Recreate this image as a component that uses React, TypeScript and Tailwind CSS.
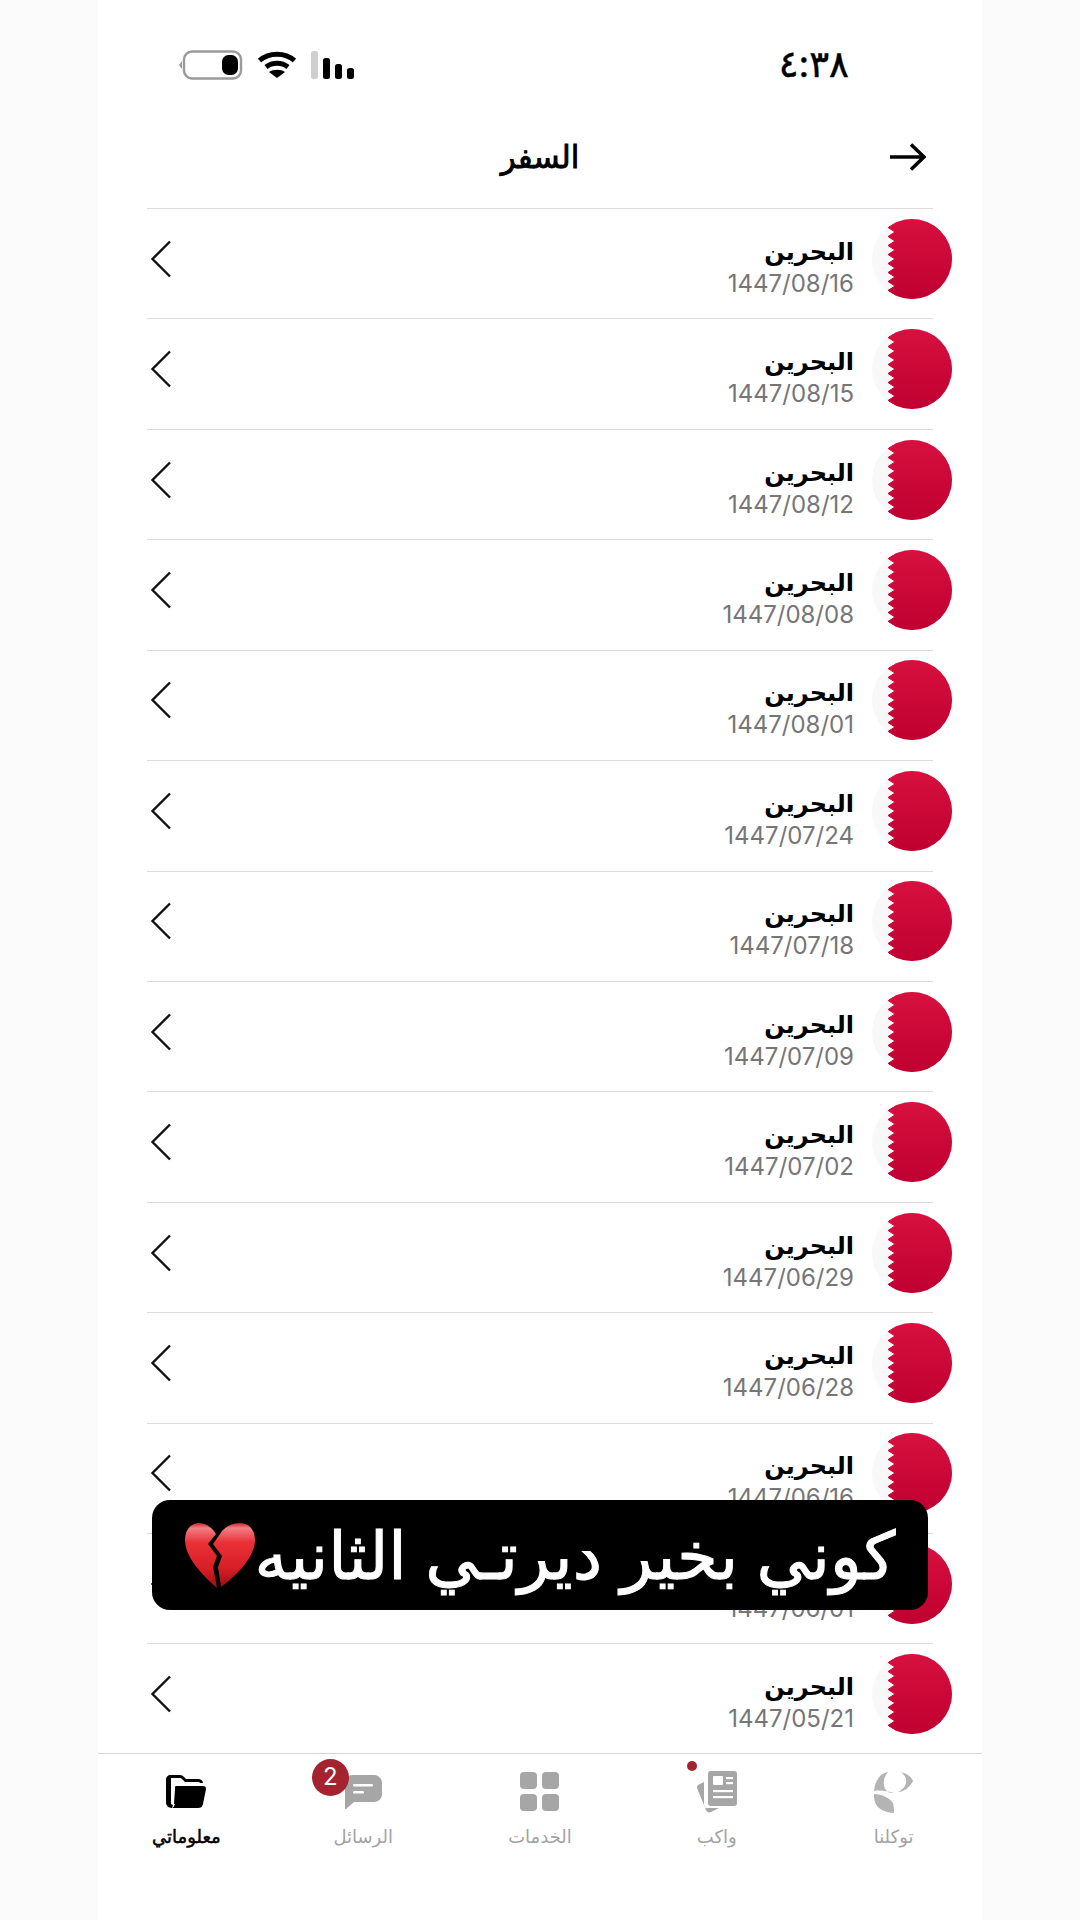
/* Travel history screen: status bar, title, flag rows, caption, tab bar */

const rows = [
  '1447/08/16',
  '1447/08/15',
  '1447/08/12',
  '1447/08/08',
  '1447/08/01',
  '1447/07/24',
  '1447/07/18',
  '1447/07/09',
  '1447/07/02',
  '1447/06/29',
  '1447/06/28',
  '1447/06/16',
  '1447/06/01',
  '1447/05/21',
];

function serratedEdge() {
  const pts: string[] = ['80,0', '23,0', '23,4'];
  for (let i = 0; i < 8; i++) {
    const top = 4 + i * 9;
    pts.push(`16,${top + 4.5}`, `23,${top + 9}`);
  }
  pts.push('23,80', '80,80');
  return pts.join(' ');
}

function Flag({ id }: { id: number }) {
  return (
    <svg width="80" height="80" viewBox="0 0 80 80" className="shrink-0">
      <defs>
        <linearGradient id={`red-${id}`} x1="0" y1="0" x2="0" y2="1">
          <stop offset="0" stopColor="#d7103f" />
          <stop offset="1" stopColor="#bf0030" />
        </linearGradient>
        <clipPath id={`disc-${id}`}>
          <circle cx="40" cy="40" r="40" />
        </clipPath>
      </defs>
      <circle cx="40" cy="40" r="40" fill="#f8f8f8" />
      <polygon
        points={serratedEdge()}
        fill={`url(#red-${id})`}
        stroke={`url(#red-${id})`}
        strokeWidth="1"
        strokeLinejoin="round"
        clipPath={`url(#disc-${id})`}
      />
    </svg>
  );
}

function Chevron() {
  return (
    <svg width="22" height="38" viewBox="0 0 22 38" fill="none" stroke="#111" strokeWidth="2.4">
      <path d="M20 1.500 2.500 19 20 36.500" />
    </svg>
  );
}

function Row({ date, id }: { date: string; id: number }) {
  return (
    <div className="h-[110.43px] border-t border-[#dcdcdc] flex items-center justify-between pl-[3px] pb-[10px]">
      <Chevron />
      <div className="flex items-center gap-[18px] -mr-[19px]">
        <div className="flex flex-col items-end mt-[18px]">
          <div dir="rtl" className="text-[24px] leading-[32px] font-semibold text-black">
            البحرين
          </div>
          <div className="text-[24px] leading-[32px] text-[#767676]">{date}</div>
        </div>
        <Flag id={id} />
      </div>
    </div>
  );
}

function BatteryIcon() {
  return (
    <svg width="64" height="30" viewBox="0 0 64 30">
      <path d="M3 11 0 15l3 4z" fill="#9a9a9a" />
      <rect x="5" y="1.500" width="57" height="27" rx="8" fill="#fff" stroke="#9a9a9a" strokeWidth="2.4" />
      <rect x="43" y="5" width="16" height="20" rx="6.500" fill="#000" />
    </svg>
  );
}

function WifiIcon() {
  return (
    <svg width="40" height="30" viewBox="0 0 40 30" fill="none" stroke="#000" strokeWidth="5">
      <path d="M2.500 10.500C12 2 28 2 37.500 10.500" />
      <path d="M9 17c6.500-5 15.500-5 22 0" />
      <path d="M20 28l-8-6c4.500-3 11.500-3 16 0z" fill="#000" stroke="none" />
    </svg>
  );
}

function SignalIcon() {
  return (
    <svg width="44" height="28" viewBox="0 0 44 28">
      <rect x="0" y="0" width="7" height="28" rx="2.500" fill="#cfcfcf" />
      <rect x="12" y="7" width="7" height="21" rx="2.500" fill="#000" />
      <rect x="24" y="13" width="7" height="15" rx="2.500" fill="#000" />
      <rect x="36" y="17" width="7" height="11" rx="2.500" fill="#000" />
    </svg>
  );
}

function BrokenHeart() {
  return (
    <svg width="70" height="65" viewBox="0 0 70 65" className="shrink-0">
      <defs>
        <linearGradient id="heart" x1="0" y1="0" x2="0" y2="1">
          <stop offset="0" stopColor="#c8242c" />
          <stop offset="0.08" stopColor="#f27f84" />
          <stop offset="0.3" stopColor="#ea3138" />
          <stop offset="0.7" stopColor="#d81f27" />
          <stop offset="1" stopColor="#9c0d14" />
        </linearGradient>
      </defs>
      <path d="M31 11C27 4 20 0 14 0 6 0 0 7 0 17c0 17 17 35 32 48l-4-21 4-11-9-12z" fill="url(#heart)" />
      <path d="M35 11c4-7 12-11 20-11 9 0 15 7 15 17 0 17-18 35-34 47l-3-20 4-11-9-12z" fill="url(#heart)" />
    </svg>
  );
}

function FolderIcon() {
  return (
    <svg width="40" height="33" viewBox="0 0 40 33">
      <path d="M5 0h9c2 0 3 1 4 2l2 2h12c3 0 5 2 5 4H34c0-1-1-1-2-1H19l-3-3c-1-1-1-1-2-1H6C4 3 3 4 3 6v21l-3 2V5c0-3 2-5 5-5z" fill="#000" />
      <path d="M0 27V6c0-3 2-6 5-6v29l2 1-1 3c-4 0-6-3-6-6z" fill="#000" />
      <path d="M10 11h27c2 0 3 1 3 3l-3 15c-1 3-2 4-5 4H6c2-1 2-2 3-4l-1 0 0 0 1-15c0-2 0-3 1-3z" fill="#000" />
    </svg>
  );
}

function ChatIcon() {
  return (
    <svg width="38" height="34" viewBox="0 0 38 34">
      <path d="M9 0h21c4 0 8 3 8 8v11c0 4-3 8-8 8H10l-8 7c-1 0-1 0-1-1V8c0-5 3-8 8-8z" fill="#a6a6a6" />
      <rect x="9" y="9" width="20" height="2.500" rx="1.200" fill="#fff" />
      <rect x="9" y="16" width="11" height="2.500" rx="1.200" fill="#fff" />
    </svg>
  );
}

function GridIcon() {
  return (
    <div className="grid grid-cols-2 gap-[5px] w-[39px]">
      <div className="h-[17px] rounded-[4px] bg-[#a6a6a6]" />
      <div className="h-[17px] rounded-[4px] bg-[#a6a6a6]" />
      <div className="h-[17px] rounded-[4px] bg-[#a6a6a6]" />
      <div className="h-[17px] rounded-[4px] bg-[#a6a6a6]" />
    </div>
  );
}

function NewsIcon() {
  return (
    <svg width="40" height="42" viewBox="0 0 40 42">
      <path d="M1 14 7 11v23c0 2 1 3 3 3l12 0-8 4c-2 1-4 0-5-2L0 17c0-1 0-2 1-3z" fill="#a6a6a6" />
      <rect x="11" y="0" width="29" height="35" rx="3" fill="#a6a6a6" />
      <rect x="16" y="5" width="10" height="9" rx="1" fill="#fff" />
      <rect x="29" y="6" width="7" height="2.200" fill="#fff" />
      <rect x="29" y="11" width="7" height="2.200" fill="#fff" />
      <rect x="16" y="19" width="20" height="2.200" fill="#fff" />
      <rect x="16" y="25" width="20" height="2.200" fill="#fff" />
    </svg>
  );
}

function TawakkalnaIcon() {
  return (
    <svg width="40" height="42" viewBox="0 0 40 42">
      <path d="M0 20C1 10 6 2 14 1 9 6 8 16 13 20c2 2 4 2 7 2-7-2-14-3-20-2z" fill="#b4b4b4" />
      <path d="M26 1c6 1 11 4 13 9-3 6-9 11-15 11 6-3 9-8 8-13-1-3-3-6-6-7z" fill="#b4b4b4" />
      <path d="M0 23c8 0 16 4 19 9 1 4 1 7 1 10-8 0-17-4-19-11-1-3-1-5-1-8z" fill="#b4b4b4" />
    </svg>
  );
}

const tabs = [
  { label: 'معلوماتي', active: true, icon: <FolderIcon /> },
  { label: 'الرسائل', active: false, icon: <ChatIcon /> },
  { label: 'الخدمات', active: false, icon: <GridIcon /> },
  { label: 'واكب', active: false, icon: <NewsIcon /> },
  { label: 'توكلنا', active: false, icon: <TawakkalnaIcon /> },
];

export default function App() {
  return (
    <div className="h-[1920px] overflow-hidden bg-[#fbfbfb] flex justify-center font-['Inter','DejaVu_Sans',sans-serif]">
      <div className="relative w-[884px] h-[1920px] bg-white flex flex-col">
        {/* Status bar */}
        <div className="h-[108px] pt-[50px] pl-[81px] pr-[133px] flex items-start justify-between">
          <div className="flex items-center gap-[14px]">
            <BatteryIcon />
            <WifiIcon />
            <SignalIcon />
          </div>
          <div dir="rtl" className="text-[37px] leading-[28px] text-black [-webkit-text-stroke:0.5px_black]">
            ٤:٣٨
          </div>
        </div>

        {/* Title */}
        <div className="h-[100px] grid grid-cols-[1fr_auto_1fr] items-center pb-[2px]">
          <div />
          <div dir="rtl" className="text-[31px] text-black [-webkit-text-stroke:0.9px_black]">
            السفر
          </div>
          <div className="flex justify-end pr-[56px]">
            <svg width="36" height="28" viewBox="0 0 36 28" fill="none" stroke="#000" strokeWidth="3.600">
              <path d="M0 14h33M21 1.500 34 14 21 26.500" />
            </svg>
          </div>
        </div>

        {/* List */}
        <div className="mx-[49px] h-[1544.5px]">
          {rows.map((date, i) => (
            <Row key={date} date={date} id={i} />
          ))}
        </div>

        {/* Tab bar */}
        <div className="border-t border-[#d4d4d4] grid grid-cols-5 pt-[17px]">
          {tabs.map((tab) => (
            <div key={tab.label} className="relative flex flex-col items-center">
              <div className="h-[42px] flex items-center justify-center">{tab.icon}</div>
              <div
                dir="rtl"
                className={`mt-[10px] text-[18px] leading-[28px] ${
                  tab.active ? 'text-black [-webkit-text-stroke:0.5px_black]' : 'text-[#a3a3a3]'
                }`}
              >
                {tab.label}
              </div>
              {tab.label === 'الرسائل' && (
                <div className="absolute left-[37px] -top-[12px] w-[37px] h-[37px] rounded-full bg-[#a3232f] text-white text-[24px] flex items-center justify-center">
                  2
                </div>
              )}
              {tab.label === 'واكب' && (
                <div className="absolute left-[59px] -top-[10px] w-[10px] h-[10px] rounded-full bg-[#a3232f]" />
              )}
            </div>
          ))}
        </div>

        {/* Caption over the list */}
        <div className="absolute left-[54px] top-[1500px] w-[776px] h-[110px] rounded-[18px] bg-black flex items-center justify-center">
          <BrokenHeart />
          <div dir="rtl" className="text-[66px] leading-none text-white whitespace-nowrap [-webkit-text-stroke:1px_white]">
            كوني بخير ديرتـي الثانيه
          </div>
        </div>
      </div>
    </div>
  );
}
